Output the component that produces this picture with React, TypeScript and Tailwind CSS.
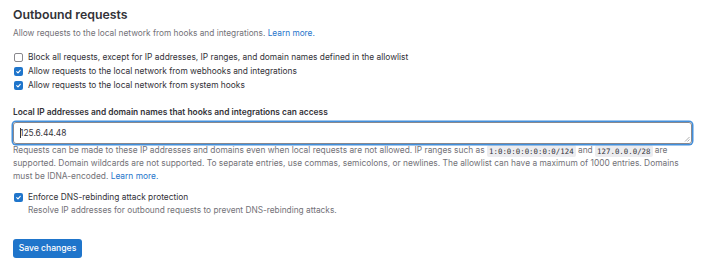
import React from 'react';

const Check: React.FC<{ checked?: boolean }> = ({ checked }) => (
    checked ? (
        <span className="flex h-[9px] w-[9px] shrink-0 items-center justify-center rounded-[2px] bg-[#1f75cb]">
            <svg width="7" height="7" viewBox="0 0 8 8" fill="none">
                <path d="M2 4.2 3.4 5.6 6 2.6" stroke="#fff" strokeWidth="1.3" strokeLinecap="round" strokeLinejoin="round" />
            </svg>
        </span>
    ) : (
        <span className="block h-[9px] w-[9px] shrink-0 rounded-[2px] border border-[#89888d] bg-white" />
    )
);

const CheckRow: React.FC<{ checked?: boolean, label: string }> = ({ checked, label }) => (
    <label className="flex h-[14px] items-center gap-[5px] pl-[1px] text-[8.4px] text-[#333238]">
        <Check checked={checked} />
        <span>{label}</span>
    </label>
);

const Code: React.FC<{ children: React.ReactNode }> = ({ children }) => (
    <code className="rounded-[2px] bg-[#ececef] px-[2px] py-[1.5px] font-['DejaVu_Sans_Mono',monospace] text-[7.4px] leading-none text-[#333238]">{children}</code>
);

const App: React.FC = () => {
    return (
        <div className="min-h-[280px] w-[713px] bg-white px-[13px] pt-[5px] font-['Inter','Noto_Sans',sans-serif] text-[#333238]">
            <h4 className="text-[12.3px] font-semibold leading-[20px]">Outbound requests</h4>
            <p className="mt-[2px] text-[8.3px] leading-[12px] text-[#737278]">
                Allow requests to the local network from hooks and integrations. <a className="text-[#1f75cb]">Learn more.</a>
            </p>

            <div className="mt-[11px]">
                <CheckRow label="Block all requests, except for IP addresses, IP ranges, and domain names defined in the allowlist" />
                <CheckRow checked label="Allow requests to the local network from webhooks and integrations" />
                <CheckRow checked label="Allow requests to the local network from system hooks" />
            </div>

            <div className="mt-[14px] text-[8.4px] font-semibold leading-[13px]">Local IP addresses and domain names that hooks and integrations can access</div>
            <div className="relative mt-[3px] flex h-[22px] w-[679px] items-center rounded-[3px] border border-[#89888d] px-[6px] text-[8.4px] shadow-[0_0_0_1.5px_#428fdc]">
                <span className="mr-[-1px] h-[10px] w-px bg-[#333238]" />
                <span>125.6.44.48</span>
                <svg className="absolute bottom-[1px] right-[1px]" width="6" height="6" viewBox="0 0 6 6">
                    <path d="M5.5 1 1 5.5M5.5 3.5 3.5 5.5" stroke="#9a9a9a" strokeWidth="0.8" />
                </svg>
            </div>
            <p className="w-[680px] text-[8.4px] leading-[13px] text-[#737278]">
                Requests can be made to these IP addresses and domains even when local requests are not allowed. IP ranges such as <Code>1:0:0:0:0:0:0:0/124</Code> and <Code>127.0.0.0/28</Code> are supported. Domain wildcards are not supported. To separate entries, use commas, semicolons, or newlines. The allowlist can have a maximum of 1000 entries. Domains must be IDNA-encoded. <a className="text-[#1f75cb]">Learn more.</a>
            </p>

            <div className="mt-[8px] flex gap-[5px] pl-[1px]">
                <div className="flex h-[13px] items-center"><Check checked /></div>
                <div>
                    <div className="text-[8.35px] leading-[13px]">Enforce DNS-rebinding attack protection</div>
                    <div className="text-[8.3px] leading-[12px] text-[#737278]">Resolve IP addresses for outbound requests to prevent DNS-rebinding attacks.</div>
                </div>
            </div>

            <button className="mt-[23px] h-[19px] w-[69px] rounded-[3px] bg-[#1f75cb] text-[8.6px] font-medium text-white">Save changes</button>
        </div>
    );
};

export default App;
